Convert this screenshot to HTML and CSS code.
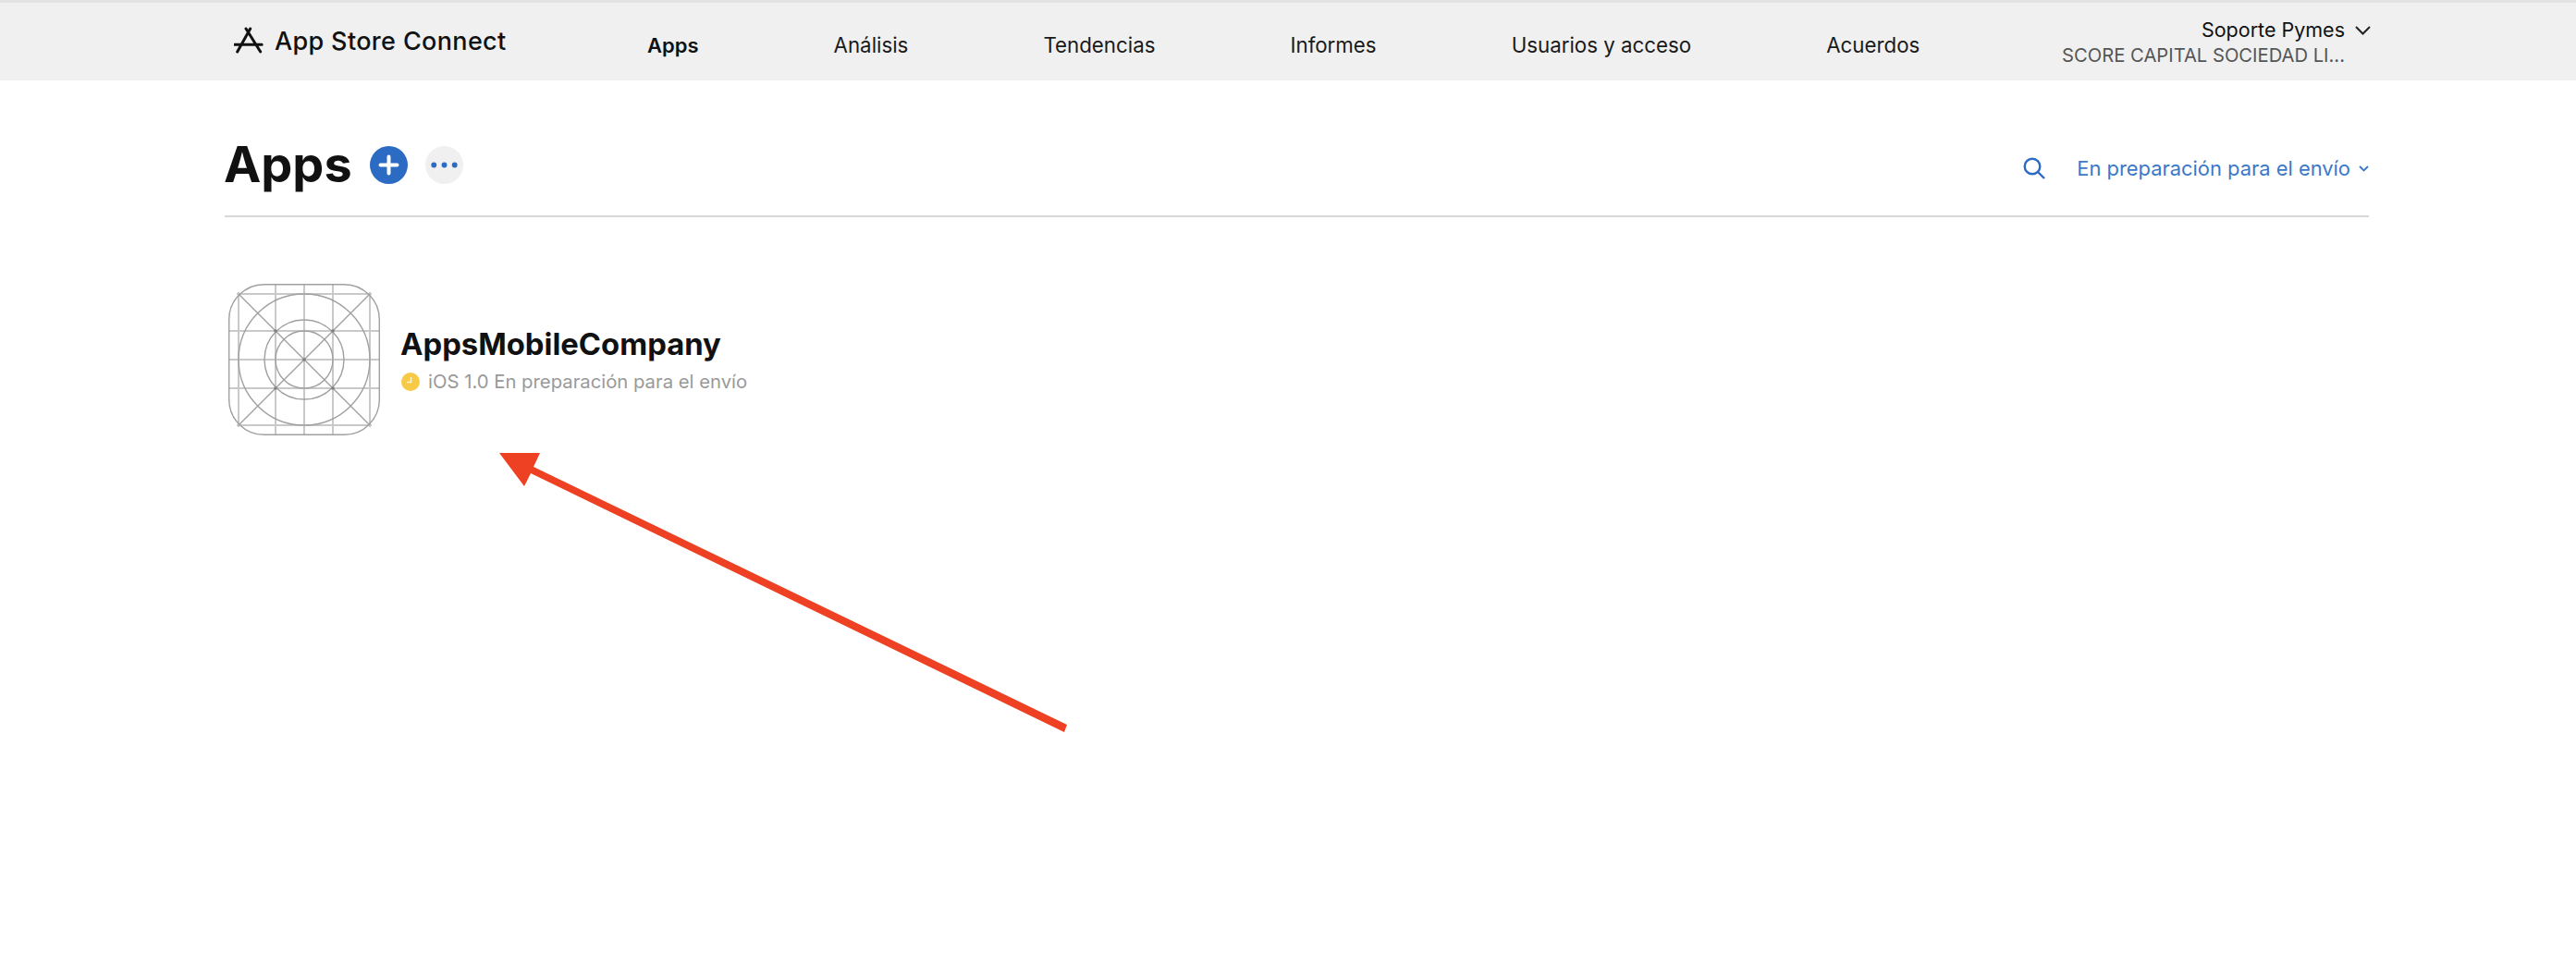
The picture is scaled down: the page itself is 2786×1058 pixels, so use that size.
FILE: index.html
```html
<!DOCTYPE html>
<html lang="es">
<head>
<meta charset="utf-8">
<title>App Store Connect</title>
<link rel="stylesheet" href="styles.css">
</head>
<body>
<header class="topbar">
  <div class="brand">
    <svg class="brand-icon" viewBox="0 0 32 30" aria-hidden="true">
      <path d="M17.7 2 3.7 27M13 2l15.7 25M.8 19.3h29.4"/>
    </svg>
    <span class="brand-name">App Store Connect</span>
  </div>
  <nav class="nav">
    <a class="nav-item nav-active">Apps</a>
    <a class="nav-item">Análisis</a>
    <a class="nav-item">Tendencias</a>
    <a class="nav-item">Informes</a>
    <a class="nav-item">Usuarios y acceso</a>
    <a class="nav-item">Acuerdos</a>
  </nav>
  <div class="account">
    <div class="account-user">
      <span>Soporte Pymes</span>
      <svg class="account-chevron" viewBox="0 0 17 10" aria-hidden="true"><path d="M1 1l7.500 7.500L16 1"/></svg>
    </div>
    <div class="account-org">SCORE CAPITAL SOCIEDAD LI...</div>
  </div>
</header>
<main class="page">
  <div class="title-row">
    <h1 class="title">Apps</h1>
    <span class="btn-add">
      <svg viewBox="0 0 41 41" aria-hidden="true"><path d="M20.500 11.500v18M11.500 20.500h18"/></svg>
    </span>
    <span class="btn-more">
      <svg viewBox="0 0 42 42" aria-hidden="true"><circle cx="9.500" cy="21" r="3"/><circle cx="21" cy="21" r="3"/><circle cx="32.500" cy="21" r="3"/></svg>
    </span>
    <div class="tools">
      <svg class="search" viewBox="0 0 24 24" aria-hidden="true"><circle cx="10" cy="10" r="8.300"/><path d="M16 16l7 7"/></svg>
      <span class="filter">En preparación para el envío</span>
      <svg class="filter-chevron" viewBox="0 0 11 7" aria-hidden="true"><path d="M1 1l4.500 4.500L10 1"/></svg>
    </div>
  </div>
  <section class="app-row">
    <svg class="app-icon" viewBox="0 0 164 164" aria-hidden="true">
      <g class="grid-lines">
        <path d="M51 1v162M82 1v162M113 1v162M11 9v146M153 9v146M1 51h162M1 82h162M1 113h162M9 11h146M9 153h146"/>
      </g>
      <g class="guide-lines">
        <rect x="0.700" y="0.700" width="162.600" height="162.600" rx="38"/>
        <circle cx="82" cy="82" r="71"/>
        <circle cx="82" cy="82" r="43"/>
        <circle cx="82" cy="82" r="31"/>
        <path d="M11 11l142 142M153 11 11 153"/>
      </g>
      <g class="nodes">
        <circle cx="51" cy="51" r="1.800"/><circle cx="113" cy="51" r="1.800"/><circle cx="82" cy="82" r="1.800"/><circle cx="51" cy="113" r="1.800"/><circle cx="113" cy="113" r="1.800"/>
      </g>
    </svg>
    <div class="app-info">
      <div class="app-name">AppsMobileCompany</div>
      <div class="app-status">
        <svg class="status-dot" viewBox="0 0 20 20" aria-hidden="true"><circle cx="10" cy="10" r="10"/><path d="M10.500 5v5.500H6"/></svg>
        <span>iOS 1.0 En preparación para el envío</span>
      </div>
    </div>
  </section>
</main>
<svg class="annotation" viewBox="0 0 640 320" aria-hidden="true">
  <path d="M0 0H44L37 15 614 294 611 302 34 22 27 36Z"/>
</svg>
</body>
</html>
```
FILE: styles.css
```css
* { box-sizing: border-box; }
html, body { margin: 0; padding: 0; }
body {
  position: relative;
  width: 2786px;
  height: 1058px;
  overflow: hidden;
  background: #fff;
  color: #111;
  font-family: Inter, "Liberation Sans", sans-serif;
}
.topbar {
  display: flex;
  align-items: flex-start;
  height: 87px;
  padding: 0 222px 0 253px;
  background: #f0f0f0;
  border-top: 3px solid #e2e2e2;
}
.brand {
  display: flex;
  align-items: center;
  gap: 12px;
  width: 447px;
  padding-top: 25px;
}
.brand-icon { width: 32px; height: 30px; flex: none; }
.brand-icon path { fill: none; stroke: #111; stroke-width: 3; stroke-linecap: round; }
.brand-name { font-size: 27px; font-weight: 500; line-height: 30px; letter-spacing: 0.35px; white-space: nowrap; padding-top: 2px; }
.nav {
  display: flex;
  gap: 146px;
  padding-top: 32px;
}
.nav-item { font-size: 22.3px; line-height: 28px; color: #1a1a1a; white-space: nowrap; }
.nav-active { font-weight: 600; font-size: 22px; color: #111; }
.account {
  margin-left: auto;
  text-align: right;
  line-height: 27px;
  padding-top: 16px;
}
.account-user { display: flex; justify-content: flex-end; align-items: center; gap: 11px; font-size: 21.5px; }
.account-chevron { width: 17px; height: 10px; }
.account-chevron path { fill: none; stroke: #222; stroke-width: 2; }
.account-org { color: #555; font-size: 20.2px; padding-right: 28px; white-space: nowrap; }
.page { padding: 0 224px 0 243px; }
.title-row {
  display: flex;
  align-items: center;
  height: 148px;
  border-bottom: 2px solid #d8d8d8;
  padding-top: 36px;
}
.title { margin: 0 0 0 -1px; font-size: 54px; font-weight: 700; line-height: 64px; }
.btn-add, .btn-more { display: block; width: 41px; height: 41px; margin-left: 19px; border-radius: 50%; }
.btn-add { background: #2b6bc4; }
.btn-add svg, .btn-more svg { display: block; width: 100%; height: 100%; }
.btn-add path { stroke: #fff; stroke-width: 4; stroke-linecap: round; fill: none; }
.btn-more { background: #f0f0f0; }
.btn-more circle { fill: #2b6bc4; }
.tools { display: flex; align-items: center; margin-left: auto; padding-top: 8px; }
.search { width: 24px; height: 24px; margin-right: 34px; }
.search circle, .search path { fill: none; stroke: #2b6bc4; stroke-width: 2.400; }
.filter { font-size: 21.9px; line-height: 28px; color: #3a78c9; white-space: nowrap; }
.filter-chevron { width: 11px; height: 7px; margin-left: 9px; }
.filter-chevron path { fill: none; stroke: #3a78c9; stroke-width: 1.800; }
.app-row { display: flex; align-items: center; padding: 72px 0 0 4px; gap: 23px; }
.app-icon { width: 164px; height: 164px; flex: none; }
.grid-lines path { fill: none; stroke: #c9c9c9; stroke-width: 2; }
.guide-lines rect, .guide-lines circle, .guide-lines path { fill: none; stroke: #a0a0a0; stroke-width: 1.400; }
.nodes circle { fill: #808080; }
.app-name { margin-left: -1px; font-size: 32.8px; font-weight: 700; line-height: 40px; color: #111; }
.app-status { display: flex; align-items: center; gap: 9px; margin-top: 8px; font-size: 20.3px; line-height: 26px; color: #999; }
.status-dot { width: 20px; height: 20px; flex: none; }
.status-dot circle { fill: #f7ca45; }
.status-dot path { fill: none; stroke: #fff6d8; stroke-width: 1.500; }
.annotation { position: absolute; left: 540px; top: 490px; width: 640px; height: 320px; }
.annotation path { fill: #ee4023; }
```
